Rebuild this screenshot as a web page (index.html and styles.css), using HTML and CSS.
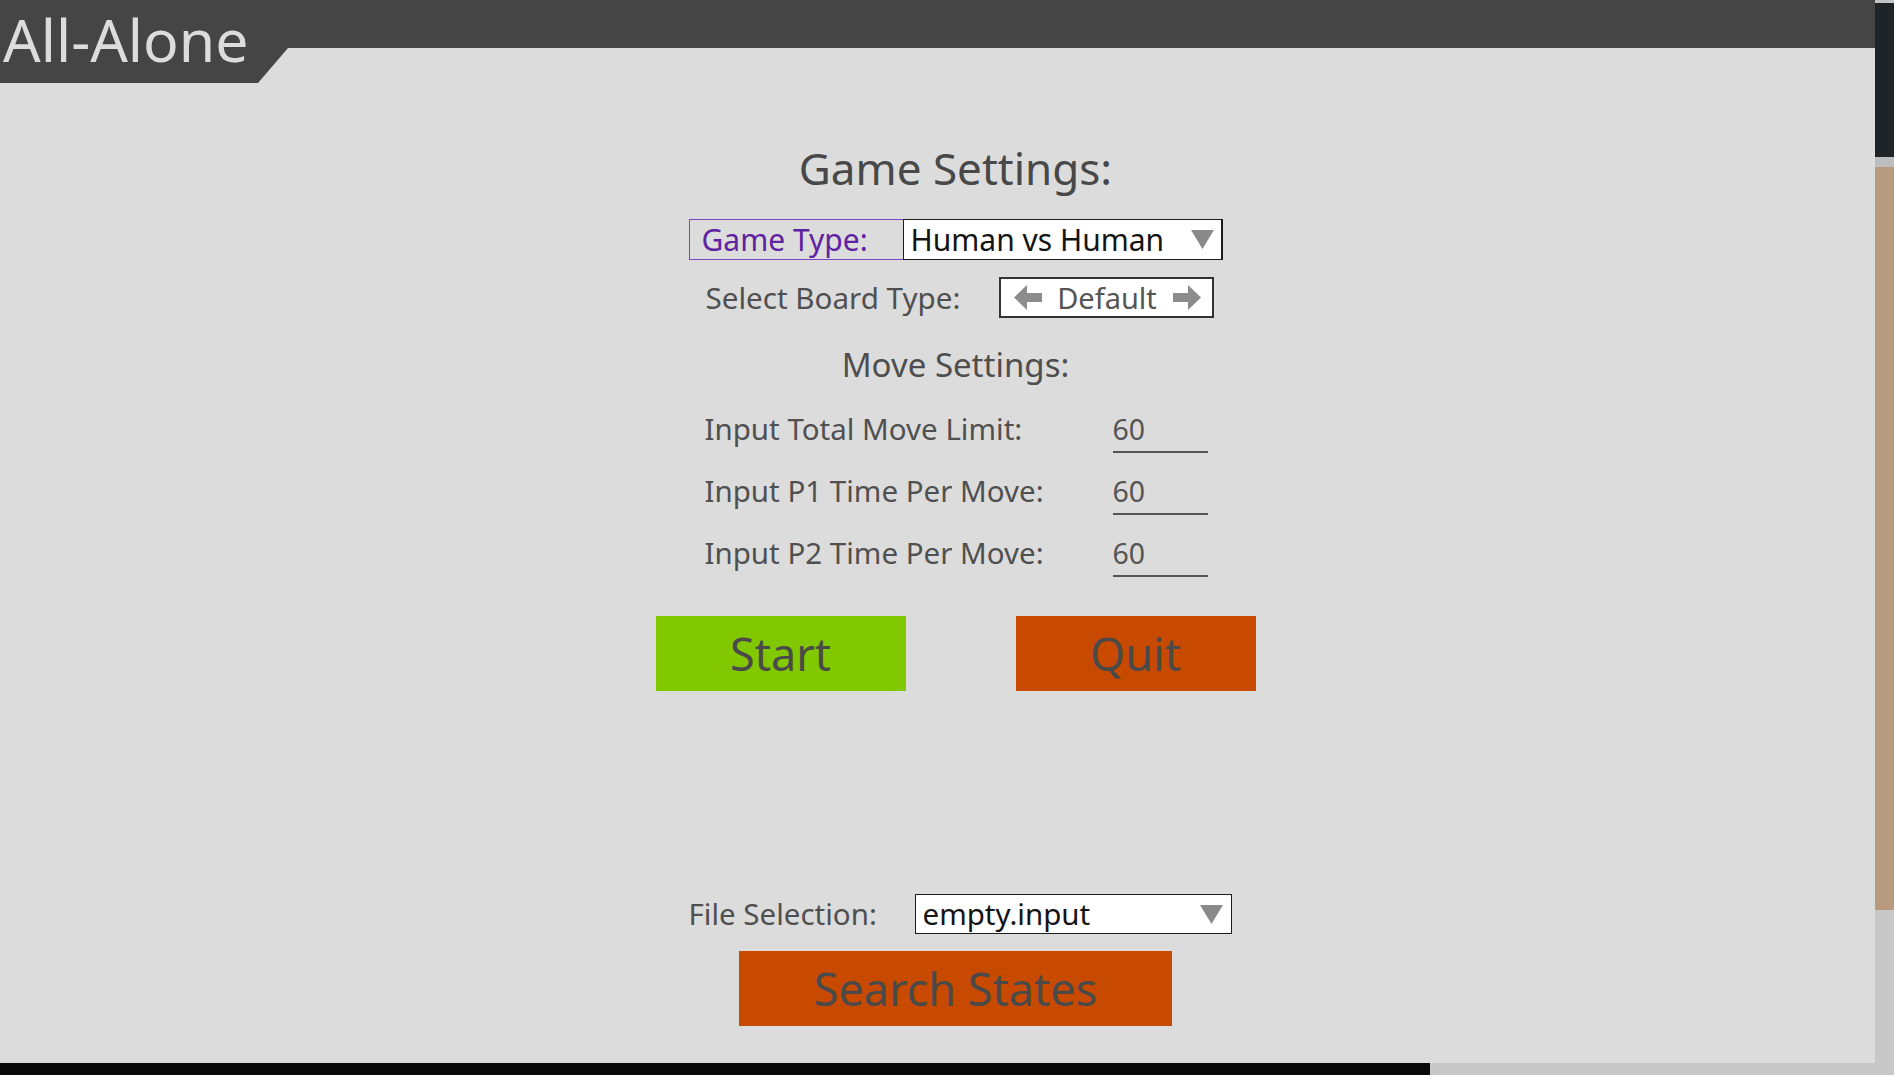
FILE: index.html
```html
<!DOCTYPE html>
<html>
<head>
<meta charset="utf-8">
<title>All-Alone</title>
<link rel="stylesheet" href="styles.css">
</head>
<body>
<div class="app">
  <header class="header">
    <div class="tab"><span class="title">All-Alone</span></div>
    <div class="bar"></div>
  </header>
  <main class="content">
    <h1 class="heading">Game Settings:</h1>
    <div class="gt">
      <div class="gt-label">Game Type:</div>
      <div class="dropdown gt-drop">
        <span class="dd-text">Human vs Human</span>
        <svg class="tri" width="23" height="19" viewBox="0 0 23 19"><path d="M0 0 H23 L11.5 19 Z" fill="#8a8a8a"/></svg>
      </div>
    </div>
    <div class="board-row">
      <span class="label board-label">Select Board Type:</span>
      <div class="board-box">
        <svg class="arrow" width="28" height="27" viewBox="0 0 28 27"><path d="M0 13.5 L13 1 L13 9 L28 9 L28 18 L13 18 L13 26 Z" fill="#8c8c8c"/></svg>
        <span class="board-text">Default</span>
        <svg class="arrow" width="28" height="27" viewBox="0 0 28 27"><path d="M28 13.5 L15 1 L15 9 L0 9 L0 18 L15 18 L15 26 Z" fill="#8c8c8c"/></svg>
      </div>
    </div>
    <h2 class="subheading">Move Settings:</h2>
    <div class="in-row first">
      <span class="label in-label">Input Total Move Limit:</span>
      <div class="in-field">60</div>
    </div>
    <div class="in-row">
      <span class="label in-label">Input P1 Time Per Move:</span>
      <div class="in-field">60</div>
    </div>
    <div class="in-row">
      <span class="label in-label">Input P2 Time Per Move:</span>
      <div class="in-field">60</div>
    </div>
    <div class="btn-row">
      <button class="btn btn-start">Start</button>
      <button class="btn btn-quit">Quit</button>
    </div>
    <div class="file-row">
      <span class="label file-label">File Selection:</span>
      <div class="dropdown file-drop">
        <span class="dd-text">empty.input</span>
        <svg class="tri" width="23" height="19" viewBox="0 0 23 19"><path d="M0 0 H23 L11.5 19 Z" fill="#8a8a8a"/></svg>
      </div>
    </div>
    <button class="btn btn-search">Search States</button>
  </main>
</div>
<div class="side">
  <div class="s-top"></div>
  <div class="s-dark"></div>
  <div class="s-band"></div>
  <div class="s-tan"></div>
</div>
<div class="bottom"></div>
</body>
</html>
```
FILE: styles.css
```css
* { box-sizing: border-box; }
html, body { margin: 0; padding: 0; }
body {
  background: #c8c8c8;
  font-family: "Noto Sans", "Open Sans", sans-serif;
  display: grid;
  grid-template-columns: 1875px 19px;
  grid-template-rows: 1063px 12px;
  width: 1894px;
  height: 1075px;
  overflow: hidden;
}
.app {
  grid-column: 1;
  grid-row: 1;
  background: #dcdcdc;
  height: 1063px;
  overflow: hidden;
  display: flex;
  flex-direction: column;
}
.header {
  display: flex;
  align-items: flex-start;
  height: 83px;
  flex: 0 0 83px;
}
.tab {
  width: 288px;
  height: 83px;
  background: #454545;
  clip-path: polygon(0 0, 100% 0, 100% 48px, 258px 83px, 0 83px);
  padding-left: 3px;
}
.title {
  display: block;
  color: #dcdcdc;
  font-size: 59px;
  line-height: 78px;
  white-space: nowrap;
}
.bar {
  flex: 1;
  height: 48px;
  background: #454545;
}
.content {
  display: flex;
  flex-direction: column;
  align-items: center;
  padding-left: 36px;
}
.heading {
  margin: 58px 0 0;
  font-size: 44px;
  line-height: 54px;
  font-weight: 400;
  color: #484848;
}
.gt {
  margin-top: 24px;
  width: 534px;
  height: 41px;
  display: flex;
  border: 1px solid #7b42c2;
}
.gt-label {
  flex: 0 0 213px;
  color: #5f22a0;
  font-size: 30px;
  line-height: 40px;
  padding-left: 12px;
}
.dropdown {
  background: #ffffff;
  border: 1px solid #1c1c1c;
  display: flex;
  align-items: center;
  padding-left: 7px;
  color: #141414;
  font-size: 30px;
}
.gt-drop {
  flex: 1;
  margin: -1px -1px -1px 0;
  border-right-width: 2px;
  padding-right: 7px;
}
.dd-text { line-height: 38px; }
.file-drop .dd-text { font-size: 29.5px; }
.tri { margin-left: auto; display: block; }
.label { color: #505050; }
.board-row {
  margin-top: 17px;
  width: 534px;
  height: 41px;
  display: flex;
  align-items: center;
  padding-left: 17px;
  padding-right: 9px;
}
.board-label { font-size: 29.6px; line-height: 40px; }
.board-box {
  margin-left: auto;
  width: 215px;
  height: 41px;
  background: #ffffff;
  border: 2px solid #333333;
  display: flex;
  align-items: center;
  justify-content: space-between;
  padding: 0 11px 0 13px;
}
.board-text { color: #555555; font-size: 29px; line-height: 36px; }
.arrow { display: block; }
.subheading {
  margin: 26px 0 0;
  font-size: 33px;
  line-height: 42px;
  font-weight: 400;
  color: #4e4e4e;
}
.in-row {
  margin-top: 14px;
  width: 534px;
  height: 48px;
  display: flex;
  align-items: flex-start;
  padding-left: 16px;
}
.in-row.first { margin-top: 23px; }
.in-label {
  flex: 0 0 408px;
  font-size: 29.5px;
  line-height: 40px;
}
.in-field {
  width: 95px;
  height: 44px;
  border-bottom: 2px solid #555555;
  font-size: 28.5px;
  line-height: 40px;
  color: #555555;
}
.btn-row {
  margin-top: 35px;
  display: flex;
  gap: 110px;
}
.btn {
  border: none;
  margin: 0;
  padding: 0;
  height: 75px;
  font-family: "Noto Sans", "Open Sans", sans-serif;
  font-size: 45px;
  color: #4a4a4a;
  display: flex;
  align-items: center;
  justify-content: center;
}
.btn-start { width: 250px; background: #82c800; }
.btn-quit { width: 240px; background: #c84900; }
.file-row {
  margin-top: 203px;
  margin-left: 9px;
  width: 543px;
  height: 40px;
  display: flex;
  align-items: center;
}
.file-label { font-size: 29.5px; line-height: 40px; }
.file-drop {
  margin-left: auto;
  width: 317px;
  height: 40px;
  padding-right: 8px;
}
.btn-search {
  margin-top: 17px;
  width: 433px;
  background: #c84900;
}
.side {
  grid-column: 2;
  grid-row: 1 / span 2;
  display: flex;
  flex-direction: column;
  background: #c8c8c8;
}
.s-top { height: 3px; background: #c4c4c4; }
.s-dark { height: 154px; background: #1f2429; }
.s-band { height: 10px; background: #bdbdbd; }
.s-tan { height: 743px; background: #b89b7e; }
.bottom {
  grid-column: 1;
  grid-row: 2;
  width: 1430px;
  height: 12px;
  background: #0a0a0a;
}
```
